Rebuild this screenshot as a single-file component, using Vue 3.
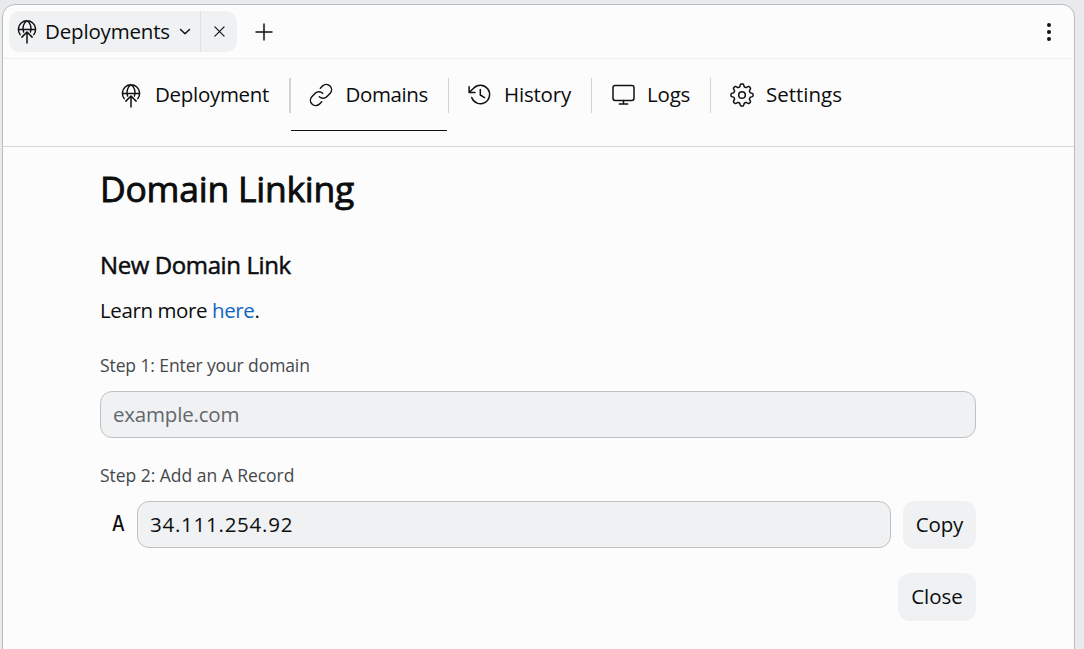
<script setup>
const tabs = [
  { label: 'Deployment', icon: 'deploy', cls: 'deployment' },
  { label: 'Domains', icon: 'link', cls: 'domains' },
  { label: 'History', icon: 'history', cls: 'history' },
  { label: 'Logs', icon: 'monitor', cls: 'logs' },
  { label: 'Settings', icon: 'gear', cls: 'settings' },
]

const globe = 'M3.200 15.600a8.600 8.600 0 1 1 13.600 0M1.500 10.400h17M6.600 13C4.900 8.500 6.800 3.600 10 1.600c3.200 2 5.100 6.900 3.400 11.400M10 24V13M4.900 18.100 10 13l5.100 5.100'

// Eight-lobed cog outline, sampled around the circle.
const gear = (() => {
  const points = []
  for (let i = 0; i < 96; i++) {
    const a = (i / 96) * Math.PI * 2
    const r = 9.7 + 1.4 * Math.tanh(2.2 * Math.cos(8 * a))
    points.push(`${(12 + r * Math.sin(a)).toFixed(2)} ${(12 - r * Math.cos(a)).toFixed(2)}`)
  }
  return `M${points.join('L')}Z`
})()
</script>

<template>
  <div class="desktop">
    <div class="window">
      <header class="tabbar">
        <div class="tab">
          <svg class="deploy-icon" viewBox="0 0 20 26"><path :d="globe" /></svg>
          <span class="tab-title">Deployments</span>
          <svg class="chevron" viewBox="0 0 12 8"><path d="m1.500 1.500 4.500 4.300 4.500-4.300" /></svg>
          <button class="tab-close" aria-label="Close tab">
            <svg viewBox="0 0 12 12"><path d="m1 1 10 10M11 1 1 11" /></svg>
          </button>
        </div>
        <button class="add" aria-label="New tab"><svg viewBox="0 0 18 18"><path d="M9 .5v17M.5 9h17" /></svg></button>
        <button class="menu" aria-label="Menu"><i></i><i></i><i></i></button>
      </header>

      <nav class="nav">
        <a v-for="t in tabs" :key="t.label" class="nav-item" :class="[t.cls, { active: t.label === 'Domains' }]">
          <svg v-if="t.icon === 'deploy'" class="deploy-icon" viewBox="0 0 20 26"><path :d="globe" /></svg>
          <svg v-else-if="t.icon === 'link'" class="icon link" viewBox="28 28 200 200"><path d="M122.300 71.400l19.800-19.800a44.100 44.100 0 0 1 62.300 62.300l-28.300 28.200a43.900 43.900 0 0 1-62.200 0M133.700 184.600l-19.800 19.800a44.100 44.100 0 0 1-62.300-62.300l28.300-28.200a43.900 43.900 0 0 1 62.200 0" /></svg>
          <svg v-else-if="t.icon === 'history'" class="icon" viewBox="0 0 24 24"><path d="M3.700 14.500A9.200 9.200 0 1 0 5.600 5.300L1.100 9.500M1.100 3.700v5.800h5.900M12.300 6.500v5.500l4.300 2.700" /></svg>
          <svg v-else-if="t.icon === 'monitor'" class="icon" viewBox="0 0 24 24"><rect x="2" y="2.500" width="21" height="15" rx="2.200" /><path d="M12.500 17.500V21M8.300 21h8.400" /></svg>
          <svg v-else class="icon gear" viewBox="0 0 24 24"><path :d="gear" /><circle cx="12" cy="12" r="3.300" /></svg>
          <span class="label">{{ t.label }}</span>
        </a>
      </nav>

      <main>
        <h1>Domain Linking</h1>
        <h2>New Domain Link</h2>
        <p class="learn">Learn more <a>here</a>.</p>
        <label class="step one">Step 1: Enter your domain</label>
        <input class="field domain" placeholder="example.com" />
        <label class="step two">Step 2: Add an A Record</label>
        <div class="record">
          <span class="type">A</span>
          <input class="field ip" value="34.111.254.92" readonly />
          <button class="btn copy">Copy</button>
        </div>
        <div class="actions"><button class="btn close">Close</button></div>
      </main>
    </div>
  </div>
</template>

<style>
body { background: #e9eaec; overflow: hidden; }
</style>

<style scoped>
* { box-sizing: border-box; }
.desktop {
  height: 649px;
  overflow: hidden;
  padding: 4px 9px 0 2px;
  color: #0c0d0e;
  font: 20.5px/28px "Open Sans", "Noto Sans", sans-serif;
}
.window {
  height: 670px;
  border: 1px solid #b9bdc0;
  border-radius: 13px;
  background: #fcfcfc;
  overflow: hidden;
}
button { font: inherit; color: inherit; border: 0; padding: 0; background: none; }
svg { display: block; flex: none; fill: none; stroke: #111; stroke-width: 1.5; stroke-linecap: round; stroke-linejoin: round; overflow: visible; }
.tabbar { height: 54px; border-bottom: 1px solid #edeff0; display: flex; align-items: flex-start; padding: 6px 0 0 6px; }
.tab { width: 228px; height: 41px; border-radius: 11px; background: #eff1f3; display: flex; align-items: center; padding-left: 8px; white-space: nowrap; }
.deploy-icon { width: 20px; height: 26px; }
.tab-title { width: 134px; padding: 0 0 2px 8px; letter-spacing: -.17px; }
.chevron { width: 12px; height: 8px; margin-left: 8px; }
.tab-close { width: 37px; height: 41px; margin-left: auto; border-left: 1px solid #dfe2e4; display: grid; place-items: center; }
.tab-close svg { width: 11px; height: 11px; stroke-width: 1.3; }
.add { margin: 12px 0 0 18px; }
.add svg { width: 18px; height: 18px; stroke-linecap: butt; }
.menu { margin: 12px 23px 0 auto; display: grid; gap: 3px; }
.menu i { width: 4px; height: 4px; border-radius: 50%; background: #111; }

.nav { height: 88px; border-bottom: 1px solid #d3d7d7; padding: 19px 0 0 98px; display: flex; align-items: flex-start; }
.nav-item { height: 35px; display: flex; align-items: center; padding: 0 0 1px 20px; border-right: 1px solid #d1d3d4; white-space: nowrap; position: relative; }
.nav-item:last-child { border: 0; }
.icon { width: 24px; height: 24px; }
.link { stroke-width: 12.5; }
.label { padding: 0 0 3px 12px; letter-spacing: -.2px; }
.deployment { width: 190px; border-right-width: 2px; }
.deployment .label { padding-left: 14px; letter-spacing: -.3px; }
.deployment .deploy-icon { margin-top: 1px; }
.domains { width: 158px; padding-left: 18px; }
.domains .label { padding-left: 12.5px; letter-spacing: -.4px; }
.history { width: 143px; padding-left: 19px; }
.logs { width: 119px; padding-left: 19px; }
.settings { padding-left: 19px; }
.settings .label { letter-spacing: 0; }
.active::after { content: ""; position: absolute; left: -.5px; right: 1.5px; top: 52px; height: 1px; background: #111; }

main { width: 973px; padding: 18px 0 0 97px; }
h1, h2 { font-weight: 400; -webkit-text-stroke: .5px #0c0d0e; }
h1 { margin: 0; font-size: 35.5px; line-height: 46px; letter-spacing: -.25px; -webkit-text-stroke-width: .85px; }
h2 { margin: 39px 0 0; font-size: 24px; line-height: 30px; letter-spacing: -.4px; }
.learn { margin: 16px 0 0; line-height: 28px; letter-spacing: -.4px; }
.learn a { color: #1264c4; }
.step { display: block; font-size: 17.5px; line-height: 24px; color: #45484d; letter-spacing: -.1px; }
.one { margin-top: 29px; }
.two { margin-top: 25px; letter-spacing: -.03px; }
.field { display: block; height: 47px; border: 1px solid #bec1c2; border-radius: 12px; background: #eff1f3; padding: 0 12px 2px; color: inherit; font: inherit; outline: 0; min-width: 0; }
.field::placeholder { color: #64676b; opacity: 1; }
.domain { width: 876px; margin-top: 14px; letter-spacing: -.2px; }
.record { margin-top: 14px; display: flex; }
.type { width: 37px; padding-left: 12px; line-height: 47px; height: 47px; font-family: "DejaVu Sans Mono", monospace; font-size: 21px; }
.ip { flex: 1; letter-spacing: .75px; }
.btn { height: 48px; border-radius: 12px; background: #eff1f3; text-align: center; padding-bottom: 2px; }
.copy { width: 73px; margin-left: 12px; letter-spacing: -.2px; }
.actions { margin-top: 24px; display: flex; justify-content: flex-end; }
.close { width: 78px; }
</style>
